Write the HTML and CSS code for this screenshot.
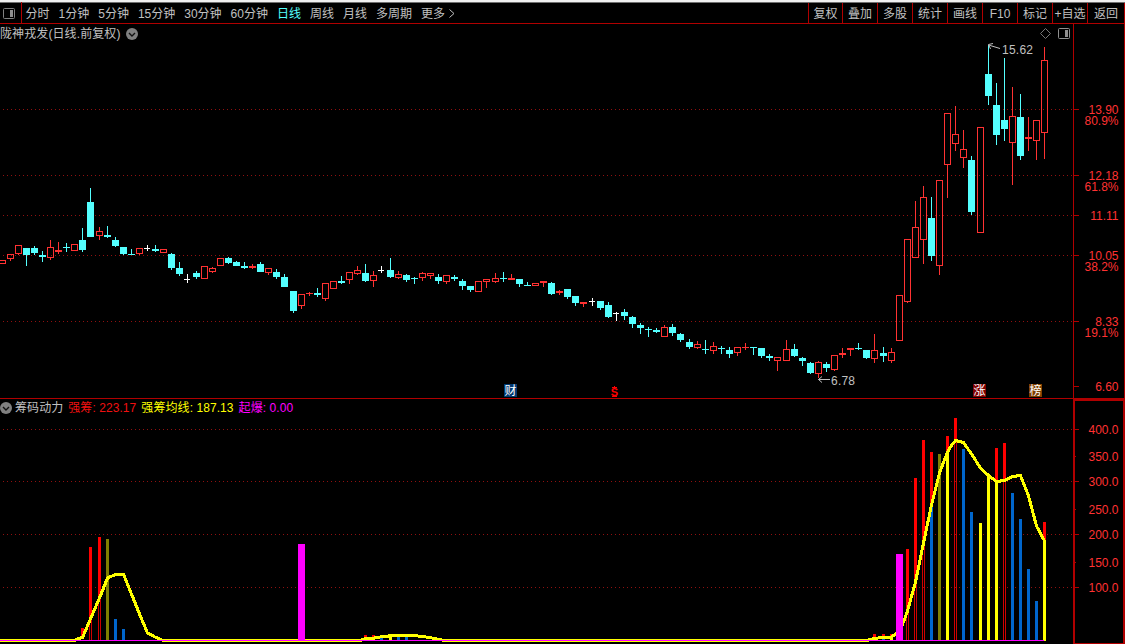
FILE: index.html
```html
<!DOCTYPE html>
<html lang="zh-CN">
<head>
    <meta charset="UTF-8">
    <meta name="viewport" content="width=device-width, initial-scale=1.0">
    <title>陇神戎发 日线</title>
    <link rel="stylesheet" href="styles.css">
</head>
<body>
    <header class="toolbar">
        <div class="toggle">
            <svg width="13" height="12" viewBox="0 0 13 12">
                <rect x="0.5" y="0.5" width="11" height="10" rx="1" fill="none" stroke="#808080"/>
                <rect x="7" y="2" width="3" height="7" fill="#909090"/>
            </svg>
        </div>
        <nav class="periods">
            <span>分时</span>
            <span>1分钟</span>
            <span>5分钟</span>
            <span>15分钟</span>
            <span>30分钟</span>
            <span>60分钟</span>
            <span class="active">日线</span>
            <span>周线</span>
            <span>月线</span>
            <span>多周期</span>
            <span class="more">更多
                <svg width="6" height="9" viewBox="0 0 6 9"><path d="M0.5 0.5L5 4.5L0.5 8.5" fill="none" stroke="#c0c0c0"/></svg>
            </span>
        </nav>
        <div class="actions">
            <span>复权</span>
            <span>叠加</span>
            <span>多股</span>
            <span>统计</span>
            <span>画线</span>
            <span>F10</span>
            <span>标记</span>
            <span>+自选</span>
            <span>返回</span>
        </div>
    </header>

    <section class="panel price">
        <div class="plot">
            <svg id="priceChart" width="1073" height="374" viewBox="0 24 1073 374"></svg>
            <div class="caption">
                <span>陇神戎发(日线.前复权)</span>
                <svg width="12" height="12" viewBox="0 0 12 12">
                    <circle cx="6" cy="6" r="6" fill="#808080"/>
                    <path d="M3 5L6 8L9 5" fill="none" stroke="#101010" stroke-width="1.4"/>
                </svg>
            </div>
            <div class="corner">
                <svg width="11" height="11" viewBox="0 0 11 11"><path d="M5.5 0.5L10.5 5.5L5.5 10.5L0.5 5.5Z" fill="none" stroke="#777"/></svg>
                <svg width="12" height="11" viewBox="0 0 12 11">
                    <rect x="0.5" y="0.5" width="11" height="10" rx="1" fill="none" stroke="#909090"/>
                    <rect x="7" y="2" width="3" height="7" fill="#909090"/>
                </svg>
            </div>
        </div>
        <div class="axis">
            <svg id="priceAxis" width="50" height="374" viewBox="1074 24 50 374"></svg>
        </div>
    </section>

    <section class="panel power">
        <div class="plot">
            <svg id="powerChart" width="1073" height="245" viewBox="0 399 1073 245"></svg>
            <div class="caption">
                <svg width="12" height="12" viewBox="0 0 12 12">
                    <circle cx="6" cy="6" r="6" fill="#808080"/>
                    <path d="M3 5L6 8L9 5" fill="none" stroke="#101010" stroke-width="1.4"/>
                </svg>
                <span>筹码动力</span>
                <span class="red">强筹: 223.17</span>
                <span class="yellow">强筹均线: 187.13</span>
                <span class="magenta">起爆: 0.00</span>
            </div>
        </div>
        <div class="axis">
            <svg id="powerAxis" width="48" height="242" viewBox="1075 401 48 242"></svg>
        </div>
    </section>

    <script src="chart.js"></script>
</body>
</html>
```
FILE: styles.css
```css
body {
    margin: 0;
    width: 1125px;
    height: 644px;
    overflow: hidden;
    background: #000;
    color: #c0c0c0;
    font-family: "Liberation Sans", "Noto Sans CJK SC", sans-serif;
    font-size: 12px;
    line-height: 14px;
    display: flex;
    flex-direction: column;
}

svg {
    display: block;
}

.toolbar {
    display: flex;
    height: 21px;
    border-top: 2px solid #f0f0f0;
    border-bottom: 1px solid #b00000;
    box-shadow: inset 0 1px 0 #707070;
}

.toggle {
    width: 22px;
    padding: 6px 0 0 3px;
    box-sizing: border-box;
    border-right: 1px solid #b00000;
}

.periods {
    display: flex;
    align-items: center;
    gap: 9px;
    padding-left: 3.5px;
    padding-top: 2px;
    flex: 1;
    white-space: nowrap;
}

.periods .active {
    color: #54ffff;
}

.more {
    display: flex;
    align-items: center;
    gap: 4px;
}

.actions {
    display: flex;
    border-right: 1px solid #b00000;
    margin-top: 1px;
}

.actions span {
    width: 34px;
    padding-top: 1px;
    border-left: 1px solid #b00000;
    display: flex;
    align-items: center;
    justify-content: center;
    white-space: nowrap;
}

.actions span:first-child {
    width: 33px;
}

.actions span:last-child {
    width: 36px;
}

.panel {
    display: flex;
}

.price {
    height: 374px;
    border-bottom: 1px solid #b00000;
}

.plot {
    position: relative;
    width: 1073px;
}

.price .axis {
    width: 50px;
    border-left: 1px solid #b00000;
    border-right: 1px solid #b00000;
}

.power {
    height: 245px;
}

.power .axis {
    width: 48px;
    height: 242px;
    border: 2px solid #b00000;
    border-bottom-width: 1px;
}

.caption {
    position: absolute;
    left: 0;
    top: 3px;
    display: flex;
    align-items: center;
    gap: 5px;
    white-space: nowrap;
}

.price .caption {
    letter-spacing: 0.1px;
}

.power .caption {
    top: 2px;
    letter-spacing: 0.07px;
}

.power .caption svg {
    margin-right: -2px;
}

.corner {
    position: absolute;
    right: 3px;
    top: 4px;
    display: flex;
    gap: 7px;
}

.red {
    color: #f01010;
}

.yellow {
    color: #ffff00;
}

.magenta {
    color: #ff00ff;
}

.grid {
    stroke: #901010;
    stroke-dasharray: 1 3;
}

.tick {
    stroke: #b00000;
}

.axis text {
    fill: #ff3232;
    text-anchor: end;
}

.mark {
    fill: #c0c0c0;
}

.arrow {
    fill: none;
    stroke: #c0c0c0;
}

.badge {
    fill: #fff;
    text-anchor: middle;
}

.signal {
    fill: #ff0000;
    font-size: 11px;
    font-weight: bold;
    text-anchor: middle;
}

.average {
    fill: none;
    stroke: #ffff00;
    stroke-width: 3;
    stroke-linejoin: round;
    shape-rendering: crispEdges;
}
```
FILE: chart.js
```js
const RED = '#ff3232';
const CYAN = '#54ffff';

// x, kind, high, body top, body bottom, low
// r = rising (hollow), f = rising with flat body, c = falling, w = unchanged
const candles = [
    [2,'r',260,260,264,264],[10,'r',254,254,259,261],[18,'r',245,245,254,255],[26,'c',248,248,255,266],
    [34,'c',246,248,253,255],[42,'c',251,255,257,262],[50,'r',240,247,258,260],[58,'f',242,250,252,254],
    [66,'c',243,247,248,252],[74,'r',244,244,251,251],[82,'c',228,240,250,252],[90,'c',188,202,237,237],
    [99,'r',227,231,236,240],[107,'c',226,235,237,238],[115,'c',237,240,246,247],[123,'c',247,247,254,255],
    [131,'c',249,254,255,255],[139,'r',248,248,254,255],[147,'w',245,248,249,251],[155,'c',245,249,251,252],
    [163,'r',249,249,253,253],[171,'c',253,254,268,270],[179,'c',262,268,274,276],[187,'w',274,279,280,283],
    [196,'c',271,273,277,279],[204,'r',266,266,279,279],[212,'r',267,268,272,273],[220,'r',258,258,266,266],
    [228,'c',257,258,263,264],[236,'c',261,262,266,266],[244,'c',262,266,268,269],[252,'f',264,266,268,269],
    [260,'c',262,264,272,272],[268,'r',268,268,273,275],[276,'c',269,272,277,279],[284,'c',274,277,287,287],
    [293,'c',291,291,311,313],[301,'r',294,294,306,309],[309,'f',292,293,294,296],[317,'c',288,293,295,297],
    [325,'r',283,283,299,301],[333,'r',281,281,289,289],[341,'c',276,281,283,284],[349,'r',272,272,280,284],
    [357,'r',266,270,274,275],[365,'c',264,273,281,282],[373,'r',271,275,281,287],[381,'w',266,270,271,273],
    [390,'c',258,270,277,278],[398,'r',271,274,278,279],[406,'c',274,275,280,282],[414,'c',277,278,279,284],
    [422,'r',272,273,278,281],[430,'r',273,273,276,279],[438,'c',274,277,281,284],[446,'r',275,275,282,284],
    [454,'c',275,277,279,281],[462,'c',279,281,286,290],[470,'c',286,286,290,292],[478,'r',281,281,292,292],
    [486,'r',279,279,282,288],[495,'r',273,278,282,283],[503,'c',272,278,279,282],[511,'f',274,278,280,280],
    [519,'c',279,279,284,287],[527,'c',282,285,286,286],[535,'r',283,283,286,286],[543,'f',281,281,283,287],
    [551,'c',282,283,294,295],[559,'f',290,291,293,295],[567,'c',289,289,297,299],[575,'c',296,296,303,306],
    [583,'f',302,302,304,307],[592,'w',298,301,302,306],[600,'c',301,301,308,310],[608,'c',302,305,317,318],
    [616,'w',312,313,314,321],[624,'c',309,312,316,320],[632,'c',316,317,324,328],[640,'c',323,325,328,334],
    [648,'c',327,329,330,337],[656,'c',328,330,332,333],[664,'r',325,327,337,337],[672,'c',324,327,333,336],
    [680,'c',333,334,340,342],[689,'c',339,342,347,349],[697,'r',341,344,348,349],[705,'c',340,349,350,354],
    [713,'r',342,346,351,354],[721,'c',346,348,349,354],[729,'c',347,350,354,358],[737,'r',347,347,353,356],
    [745,'f',343,347,348,350],[753,'c',347,347,348,355],[761,'c',348,348,356,358],[769,'c',354,356,358,361],
    [777,'r',357,357,361,371],[786,'r',340,349,361,361],[794,'c',344,349,356,357],[802,'c',357,358,361,366],
    [810,'c',362,363,373,374],[818,'r',361,362,374,378],[826,'c',362,364,368,372],[834,'r',355,355,370,371],
    [842,'f',348,353,355,358],[850,'f',348,348,350,356],[858,'c',343,348,349,350],[866,'c',350,350,358,359],
    [874,'r',334,350,359,363],[883,'c',347,353,356,362],[891,'r',348,352,361,363],[899,'r',295,295,341,341],
    [907,'r',239,239,302,303],[915,'r',201,227,258,258],[923,'r',186,197,240,264],[931,'c',197,218,256,261],
    [939,'r',180,180,266,275],[947,'r',113,113,165,198],[955,'r',106,134,144,151],[963,'r',130,149,158,168],
    [971,'c',156,160,212,215],[980,'r',127,127,233,233],[988,'c',45,74,96,105],[996,'c',83,105,135,145],
    [1004,'c',58,120,129,141],[1012,'r',87,116,143,185],[1020,'c',94,117,156,160],[1028,'f',117,137,139,151],
    [1036,'r',120,120,141,160],[1044,'r',47,60,133,159]
];

// x, top, bottom, colour ("split" = two thin red lines)
const bars = [
    [82,628,636,'red'],[90,547,617,'red'],[90,617,640,'split'],[99,537,597,'red'],[99,597,640,'split'],
    [107,539,640,'olive'],[115,619,640,'blue'],[123,629,640,'blue'],
    [365,635,638,'red'],[373,635,638,'red'],[381,635,637,'red'],[381,638,640,'blue'],[390,634,636,'red'],
    [390,636,640,'yellow'],[398,637,640,'blue'],[406,637,640,'blue'],
    [874,634,637,'red'],[883,634,637,'red'],[883,638,640,'blue'],[891,634,637,'red'],[891,637,640,'yellow'],
    [907,549,612,'red'],[907,612,640,'split'],[915,478,582,'red'],[915,582,640,'split'],
    [923,440,543,'red'],[923,543,640,'split'],[931,452,506,'red'],[931,506,640,'blue'],
    [939,454,640,'olive'],[947,436,452,'red'],[947,452,640,'yellow'],[955,418,440,'red'],[955,440,640,'split'],
    [963,449,640,'blue'],[971,512,640,'blue'],[980,523,640,'yellow'],[988,475,640,'yellow'],
    [996,448,481,'red'],[996,481,640,'yellow'],[1004,443,480,'red'],[1004,480,640,'split'],
    [1012,493,640,'blue'],[1020,519,640,'blue'],[1028,569,640,'blue'],[1036,601,640,'blue'],
    [1044,522,540,'red'],[1044,540,641,'yellow']
];

const barColors = { red: '#ff0000', olive: '#808000', blue: '#0066cc', yellow: '#ffff00' };

const average = '0,640.5 75,640.5 77,639 82.5,637.5 90.5,619 99.5,598 107.5,578 115.5,574.5 123.5,574.5 131.5,594 ' +
    '139.5,614 147.5,633 155,637 162,640 165,640.5 360,640.5 364,639 372,638.5 380,637 393,635.5 411,635.5 ' +
    '422,636.3 432,638 442,640 445,640.5 867,640.5 874,638.5 882,637.5 891,637 899,632 904,621 907.5,611 915.5,582 ' +
    '923.5,543 931.5,505 939.5,473 947.5,452 951,446 955.5,440.5 963.5,442.5 971.5,454 980.5,468 988.5,475.5 ' +
    '996.5,481.5 1004.5,480.5 1012.5,476.5 1020.5,475.5 1028.5,496 1036.5,526 1044.5,541';

function rect(x, y, w, h, fill) {
    return `<rect x="${x}" y="${y}" width="${w}" height="${h}" fill="${fill}"/>`;
}

function grid(rows) {
    return rows.map(y => `<line class="grid" x1="3" x2="1073" y1="${y}.5" y2="${y}.5"/>`).join('');
}

function drawCandle([x, kind, high, top, bottom, low]) {
    const color = kind === 'c' ? CYAN : kind === 'w' ? '#ffffff' : RED;
    if (kind !== 'r') {
        return rect(x, high, 1, low - high, color) +
            rect(x - 3, top, kind === 'w' ? 6 : 7, bottom - top, color);
    }
    return rect(x, high, 1, top - high, color) + rect(x, bottom, 1, low - bottom, color) +
        `<rect x="${x - 2.5}" y="${top + 0.5}" width="6" height="${bottom - top - 1}" fill="none" stroke="${RED}"/>`;
}

function drawBar([x, top, bottom, color]) {
    if (color === 'split') {
        return rect(x - 1, top, 1, bottom - top, '#d00000') + rect(x + 1, top, 1, bottom - top, '#d00000');
    }
    return rect(x - 1, top, 3, bottom - top, barColors[color]);
}

function badge(x, text, color) {
    return rect(x, 384, 13, 13, color) + `<text class="badge" x="${x + 6.5}" y="395">${text}</text>`;
}

document.getElementById('priceChart').innerHTML =
    grid([109, 175, 215, 255, 321]) +
    candles.map(drawCandle).join('') +
    '<path class="arrow" d="M988.5 45L1000 48.5M993 43.5L988.5 44.5L990.5 49"/>' +
    '<text class="mark" x="1002" y="54" textLength="31">15.62</text>' +
    '<path class="arrow" d="M818.5 379.5H830M822 376.5L818.5 379.5L822 382.5"/>' +
    '<text class="mark" x="831" y="385" textLength="24">6.78</text>' +
    badge(504, '财', '#003870') + badge(973, '涨', '#800000') + badge(1029, '榜', '#804000') +
    '<text class="signal" x="614.5" y="396">S</text>' +
    rect(614, 386, 1, 1, '#ff0000') + rect(612, 387, 5, 1, '#ff0000') + rect(612, 396, 5, 1, '#ff0000');

// pixel row, price, retracement
const priceLabels = [
    [109, '13.90', '80.9%'], [175, '12.18', '61.8%'], [215, '11.11'],
    [255, '10.05', '38.2%'], [321, '8.33', '19.1%'], [386, '6.60']
];

document.getElementById('priceAxis').innerHTML = priceLabels.map(([y, price, pct]) =>
    `<line class="tick" x1="1074" x2="1079" y1="${y}.5" y2="${y}.5"/>` +
    `<text x="1118.5" y="${y + 5}">${price}</text>` +
    (pct ? `<text x="1118.5" y="${y + 16}">${pct}</text>` : '')
).join('');

document.getElementById('powerChart').innerHTML =
    grid([429, 481, 534, 587]) +
    bars.map(drawBar).join('') +
    `<polyline class="average" points="${average}"/>` +
    rect(298, 544, 7, 97, '#ff00ff') + rect(896, 554, 7, 87, '#ff00ff') +
    rect(0, 640, 1044, 1, '#ff00ff');

const powerLabels = [
    [429, '400.0'], [456, '350.0'], [481, '300.0'], [509, '250.0'],
    [534, '200.0'], [562, '150.0'], [587, '100.0']
];

document.getElementById('powerAxis').innerHTML = powerLabels.map(([y, value], i) =>
    `<line class="tick" x1="1075" x2="${i % 2 ? 1076 : 1079}" y1="${y}.5" y2="${y}.5"/>` +
    `<text x="1118.5" y="${y + 5}">${value}</text>`
).join('');
```
